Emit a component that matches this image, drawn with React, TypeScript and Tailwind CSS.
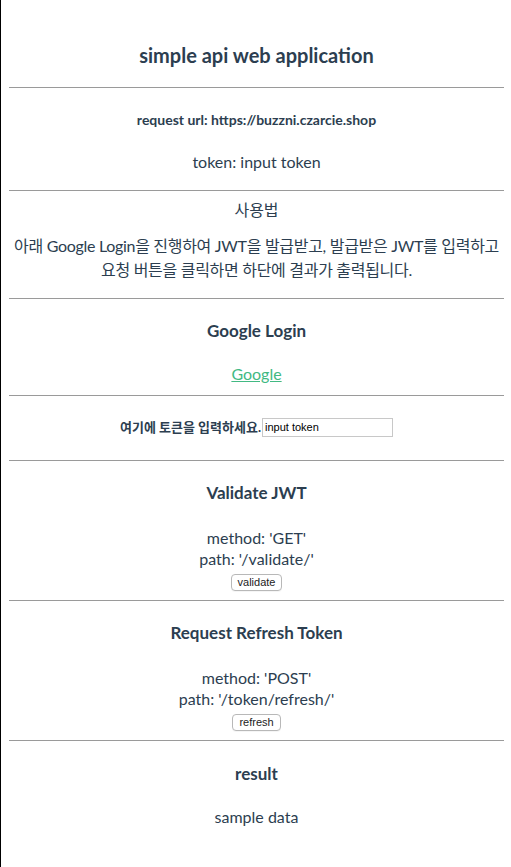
import React from "react";

const font = { fontFamily: 'Lato, "Noto Sans CJK KR", sans-serif' };

function Rule() {
  return <div className="h-0 border-t border-[#9a9a9a]" />;
}

function Endpoint({
  title,
  method,
  path,
  label,
}: {
  title: string;
  method: string;
  path: string;
  label: string;
}) {
  return (
    <div className="pt-[22px] pb-[9px]">
      <h3 className="text-[17px] leading-[20px] font-bold">{title}</h3>
      <p className="mt-[24px] text-[16px] leading-[21px]">method: '{method}'</p>
      <p className="text-[16px] leading-[21px]">path: '{path}'</p>
      <div className="mt-[5px] flex justify-center">
        <button className="h-[17px] px-[6px] rounded-[4px] border border-[#b8b8b8] bg-white text-[11px] leading-[15px] text-[#222] font-['Liberation_Sans',sans-serif] shadow-[0_1px_0_rgba(0,0,0,0.04)]">
          {label}
        </button>
      </div>
    </div>
  );
}

export default function App() {
  return (
    <div
      className="min-h-screen border-l border-black bg-white text-[#2c3e50] text-center pl-[8px] pr-[7px]"
      style={font}
    >
      <div className="pt-[44px] pb-[21px]">
        <h3 className="text-[20px] leading-[22px] font-bold">simple api web application</h3>
      </div>
      <Rule />

      <div className="pt-[24px] pb-[18px]">
        <h5 className="text-[14px] leading-[16px] font-bold">request url: https://buzzni.czarcie.shop</h5>
        <p className="mt-[24px] text-[16px] leading-[20px]">token: input token</p>
      </div>
      <Rule />

      <div className="pt-[9px] pb-[16px]">
        <p className="text-[16px] leading-[20px]">사용법</p>
        <p className="mt-[14px] text-[16px] leading-[24px] tracking-[-0.3px] whitespace-nowrap">
          아래 Google Login을 진행하여 JWT을 발급받고, 발급받은 JWT를 입력하고
          <br />
          요청 버튼을 클릭하면 하단에 결과가 출력됩니다.
        </p>
      </div>
      <Rule />

      <div className="pt-[22px] pb-[11px]">
        <h3 className="text-[17px] leading-[20px] font-bold">Google Login</h3>
        <p className="mt-[23px] text-[16px] leading-[20px]">
          <a href="#" className="text-[#42b983] underline">
            Google
          </a>
        </p>
      </div>
      <Rule />

      <div className="pt-[21px] pb-[23px] flex justify-center items-center h-[20px] box-content">
        <label className="text-[13px] font-bold leading-[20px]">여기에 토큰을 입력하세요.</label>
        <input
          defaultValue="input token"
          className="ml-[1px] w-[131px] h-[19px] border border-[#c8c8c8] px-[2px] text-[11px] text-black outline-none font-['Liberation_Sans',sans-serif]"
        />
      </div>
      <Rule />

      <Endpoint title="Validate JWT" method="GET" path="/validate/" label="validate" />
      <Rule />

      <Endpoint title="Request Refresh Token" method="POST" path="/token/refresh/" label="refresh" />
      <Rule />

      <div className="pt-[23px] pb-[40px]">
        <h3 className="text-[17px] leading-[20px] font-bold">result</h3>
        <p className="mt-[23px] text-[16px] leading-[20px]">sample data</p>
      </div>
    </div>
  );
}
